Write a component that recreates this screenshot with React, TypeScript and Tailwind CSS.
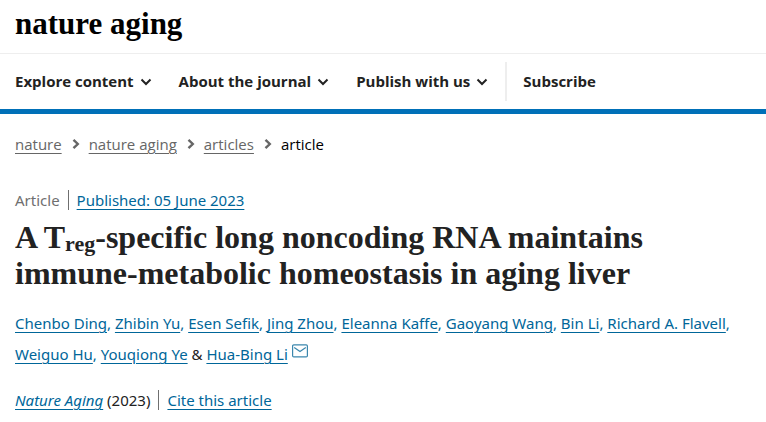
const menus = ['Explore content', 'About the journal', 'Publish with us'];

const crumbs = ['nature', 'nature aging', 'articles'];

const authors = [
  'Chenbo Ding',
  'Zhibin Yu',
  'Esen Sefik',
  'Jing Zhou',
  'Eleanna Kaffe',
  'Gaoyang Wang',
  'Bin Li',
  'Richard A. Flavell',
  'Weiguo Hu',
];

const linkClass = 'text-[#006699] underline underline-offset-3 hover:no-underline';

function ChevronDown() {
  return (
    <svg width="12" height="8" viewBox="0 0 12 8" fill="none" stroke="#222222" strokeWidth="2" aria-hidden="true">
      <path d="M1.5 1.5L6 6l4.5-4.5" />
    </svg>
  );
}

function ChevronRight() {
  return (
    <svg width="8" height="12" viewBox="0 0 8 12" fill="none" stroke="#666666" strokeWidth="2.4" aria-hidden="true">
      <path d="M1.5 1.8L5.8 6l-4.3 4.2" />
    </svg>
  );
}

function MailIcon() {
  return (
    <svg className="inline-block align-text-top" width="16" height="14" viewBox="0 0 16 14" fill="none" stroke="#3b87ad" strokeWidth="1.2" role="img" aria-label="Email">
      <rect x="0.6" y="0.9" width="14.8" height="12" rx="1.2" />
      <path d="M2.2 3.4L8 7.4l5.8-4" />
    </svg>
  );
}

export default function App() {
  return (
    <div className="min-h-screen bg-white font-['Noto_Sans',sans-serif] text-[15px] text-[#222222]">
      <header className="border-b-5 border-[#0070b8]">
        <div className="flex h-[54px] border-b border-[#eeeeee] px-[15px] pt-1">
          <a href="#home" className="font-['Liberation_Serif',serif] text-[31px] leading-10 font-bold text-black">
            nature aging
          </a>
        </div>
        <nav className="flex h-[55px] items-center px-[15px] font-['Open_Sans',sans-serif] font-bold">
          <div className="flex gap-[27px]">
            {menus.map((menu) => (
              <button key={menu} type="button" className="flex cursor-pointer items-center gap-1.5 whitespace-nowrap">
                {menu}
                <ChevronDown />
              </button>
            ))}
          </div>
          <div className="ml-[17px] flex h-[39px] items-center border-l-2 border-[#eeeeee] pl-4">
            <a href="#subscribe">Subscribe</a>
          </div>
        </nav>
      </header>

      <main className="px-[15px] pt-[18px]">
        <nav aria-label="Breadcrumb" className="font-['Open_Sans',sans-serif]">
          <ol className="flex items-center gap-[9px] leading-6">
            {crumbs.map((crumb) => (
              <li key={crumb} className="flex items-center gap-2.5">
                <a href="#crumb" className="text-[#666666] underline underline-offset-3">{crumb}</a>
                <ChevronRight />
              </li>
            ))}
            <li className="text-black">article</li>
          </ol>
        </nav>

        <ul className="mt-[34px] flex items-center leading-5">
          <li className="border-r border-[#6f6f6f] pr-2 text-[#6f6f6f]">Article</li>
          <li className="pl-2">
            <a href="#published" className={linkClass}>
              Published: <time dateTime="2023-06-05">05 June 2023</time>
            </a>
          </li>
        </ul>

        <h1 className="mt-[9px] font-['Liberation_Serif',serif] text-[32px] leading-9 font-bold">
          A T<sub className="bottom-[-3px] text-[22px] leading-none">reg</sub>-specific long noncoding RNA maintains immune-metabolic homeostasis in aging liver
        </h1>

        <p className="mt-[17px] leading-[31px]">
          {authors.map((author) => (
            <span key={author} className="text-[#006699]">
              <a href="#author" className={linkClass}>{author}</a>
              {', '}
            </span>
          ))}
          <a href="#author" className={linkClass}>Youqiong Ye</a>
          {' & '}
          <a href="#author" className={linkClass}>Hua-Bing Li</a>{' '}
          <a href="#mail"><MailIcon /></a>
        </p>

        <div className="mt-5 flex items-center leading-5">
          <p className="border-r border-[#6f6f6f] pr-2">
            <a href="#journal" className={linkClass}><i>Nature Aging</i></a> (2023)
          </p>
          <a href="#cite" className={`ml-2 ${linkClass}`}>Cite this article</a>
        </div>
      </main>
    </div>
  );
}
